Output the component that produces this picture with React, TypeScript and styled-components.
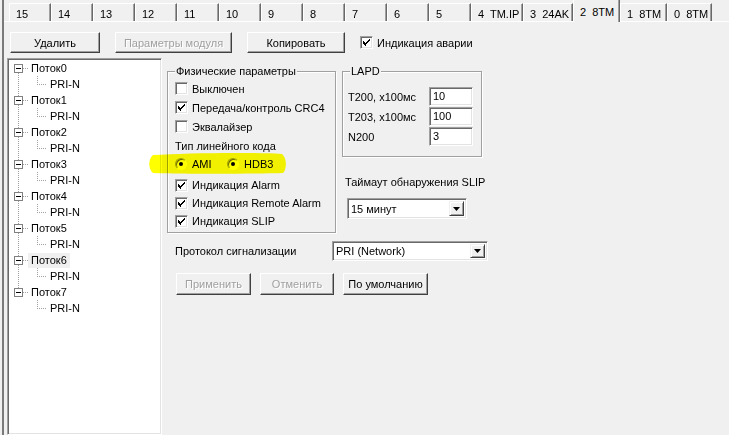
import styled, { createGlobalStyle } from 'styled-components'

const GlobalStyle = createGlobalStyle`
  html, body {
    margin: 0;
    padding: 0;
    background: #f0f0f0;
  }
  body {
    font-family: "Liberation Sans", Arial, sans-serif;
    font-size: 11px;
    color: #000;
    overflow: hidden;
  }
  * {
    box-sizing: border-box;
  }
`

const tabs = [
  { label: '15', w: 42 },
  { label: '14', w: 42 },
  { label: '13', w: 42 },
  { label: '12', w: 42 },
  { label: '11', w: 42 },
  { label: '10', w: 42 },
  { label: '9', w: 42 },
  { label: '8', w: 42 },
  { label: '7', w: 42 },
  { label: '6', w: 42 },
  { label: '5', w: 42 },
  { label: '4 TM.IP', w: 52 },
  { label: '3 24AK', w: 50 },
  { label: '2 8TM', w: 47, active: true },
  { label: '1 8TM', w: 47 },
  { label: '0 8TM', w: 45 },
]

const streams = [0, 1, 2, 3, 4, 5, 6, 7]

const CheckMark = () => (
  <svg width="7" height="7" viewBox="0 0 7 7" shapeRendering="crispEdges">
    <path d="M0 2h1v1H0zM0 3h2v1H0zM0 4h3v1H0zM1 5h2v1H1zM2 6h1v1H2zM3 3h1v2H3zM4 2h1v2H4zM5 1h1v2H5zM6 0h1v2H6z" fill="#000" />
  </svg>
)

const Check = ({ checked }: { checked?: boolean }) => (
  <CheckBox>{checked && <CheckMark />}</CheckBox>
)

const Combo = ({ value, w, h }: { value: string; w: number; h: number }) => (
  <ComboBox $w={w} $h={h}>
    <ComboText>{value}</ComboText>
    <ComboButton>
      <svg width="7" height="4" viewBox="0 0 7 4">
        <path d="M0 0h7L3.5 4z" fill="#000" />
      </svg>
    </ComboButton>
  </ComboBox>
)

const App = () => {
  return (
    <Screen>
      <GlobalStyle />
      <Window>
        <TabStrip>
          {tabs.map((t) => (
            <Tab key={t.label} $w={t.w} $active={t.active}>
              {t.label}
            </Tab>
          ))}
        </TabStrip>

        <Toolbar>
          <Button $w={90}>Удалить</Button>
          <Button $w={117} disabled>Параметры модуля</Button>
          <Button $w={98}>Копировать</Button>
          <CheckItem>
            <Check checked />
            <span>Индикация аварии</span>
          </CheckItem>
        </Toolbar>

        <Body>
          <Tree>
            {streams.map((i) => (
              <TreeGroup key={i} $last={i === streams.length - 1}>
                <NodeRow>
                  <Expander />
                  <HDots />
                  <NodeLabel $selected={i === 6}>Поток{i}</NodeLabel>
                </NodeRow>
                <LeafRow>
                  <Elbow />
                  <NodeLabel>PRI-N</NodeLabel>
                </LeafRow>
              </TreeGroup>
            ))}
          </Tree>

          <Settings>
            <TopGrid>
              <GroupBox $w={169} $h={162}>
                <Legend>Физические параметры</Legend>
                <PhysBody>
                  <Row $h={19}>
                    <CheckItem>
                      <Check />
                      <span>Выключен</span>
                    </CheckItem>
                  </Row>
                  <Row $h={19}>
                    <CheckItem>
                      <Check checked />
                      <span>Передача/контроль CRC4</span>
                    </CheckItem>
                  </Row>
                  <Row $h={19}>
                    <CheckItem>
                      <Check />
                      <span>Эквалайзер</span>
                    </CheckItem>
                  </Row>
                  <Row $h={19}>Тип линейного кода</Row>
                  <RadioRow>
                    <RadioItem $w={52}>
                      <Radio $on />
                      <span>AMI</span>
                    </RadioItem>
                    <RadioItem>
                      <Radio $on />
                      <span>HDB3</span>
                    </RadioItem>
                  </RadioRow>
                  <Row $h={18}>
                    <CheckItem>
                      <Check checked />
                      <span>Индикация Alarm</span>
                    </CheckItem>
                  </Row>
                  <Row $h={18}>
                    <CheckItem>
                      <Check checked />
                      <span>Индикация Remote Alarm</span>
                    </CheckItem>
                  </Row>
                  <Row $h={18}>
                    <CheckItem>
                      <Check checked />
                      <span>Индикация SLIP</span>
                    </CheckItem>
                  </Row>
                </PhysBody>
              </GroupBox>

              <RightCol>
                <GroupBox $w={140} $h={86}>
                  <Legend>LAPD</Legend>
                  <LapdBody>
                    <FieldRow>
                      <FieldLabel>T200, x100мс</FieldLabel>
                      <TextField>10</TextField>
                    </FieldRow>
                    <FieldRow>
                      <FieldLabel>T203, x100мс</FieldLabel>
                      <TextField>100</TextField>
                    </FieldRow>
                    <FieldRow>
                      <FieldLabel>N200</FieldLabel>
                      <TextField>3</TextField>
                    </FieldRow>
                  </LapdBody>
                </GroupBox>
                <SlipLabel>Таймаут обнаружения SLIP</SlipLabel>
                <SlipCombo>
                  <Combo value="15 минут" w={120} h={21} />
                </SlipCombo>
              </RightCol>
            </TopGrid>

            <ProtoRow>
              <ProtoLabel>Протокол сигнализации</ProtoLabel>
              <Combo value="PRI (Network)" w={156} h={20} />
            </ProtoRow>

            <ButtonRow>
              <Button $w={75} $h={22} disabled>Применить</Button>
              <Button $w={74} $h={22} disabled>Отменить</Button>
              <Button $w={85} $h={22}>По умолчанию</Button>
            </ButtonRow>
          </Settings>
        </Body>
      </Window>

      <Marker width="142" height="26" viewBox="0 0 142 26">
        <path
          d="M6 4 C 40 2, 100 1, 135 3 C 140 7, 140 18, 136 22 C 100 23, 40 23, 6 22 C 1 18, 1 8, 6 4 Z"
          fill="#ffff00"
        />
      </Marker>
    </Screen>
  )
}

export default App

const Screen = styled.div`
  position: relative;
  width: 729px;
  height: 435px;
  overflow: hidden;
  background: #f0f0f0;
`
const Window = styled.div`
  height: 435px;
  margin-left: 2px;
  border-left: 2px solid #7a7a7a;
  display: flex;
  flex-direction: column;
`
const TabStrip = styled.div`
  height: 22px;
  padding-left: 5px;
  display: flex;
  align-items: flex-end;
  border-bottom: 1px solid #fff;
`
const Tab = styled.div<{ $w: number; $active?: boolean }>`
  position: relative;
  width: ${(p) => p.$w}px;
  height: ${(p) => (p.$active ? 23 : 18)}px;
  margin-bottom: ${(p) => (p.$active ? -1 : 0)}px;
  padding: ${(p) => (p.$active ? 6 : 4)}px 0 0 6px;
  line-height: 13px;
  white-space: pre;
  word-spacing: 3px;
  background: #f0f0f0;
  border-top: 1px solid #fff;
  border-left: 1px solid #fff;
  border-right: 1px solid #696969;
  box-shadow: inset -1px 0 #a0a0a0;
  z-index: ${(p) => (p.$active ? 1 : 0)};
`
const Toolbar = styled.div`
  height: 21px;
  margin-top: 10px;
  padding-left: 6px;
  display: flex;
  align-items: center;
  gap: 15px;
`
const Button = styled.button<{ $w: number; $h?: number }>`
  width: ${(p) => p.$w}px;
  height: ${(p) => p.$h ?? 21}px;
  padding: 0;
  font: inherit;
  color: #000;
  background: #f0f0f0;
  border: 1px solid;
  border-color: #fff #404040 #404040 #fff;
  box-shadow: inset -1px -1px #a0a0a0;
  border-radius: 0;

  &:disabled {
    color: #a0a0a0;
    text-shadow: 1px 1px 0 #fff;
  }
`
const CheckItem = styled.label`
  display: flex;
  align-items: center;
  gap: 4px;
  white-space: nowrap;
`
const CheckBox = styled.span`
  width: 13px;
  height: 13px;
  display: inline-flex;
  align-items: center;
  justify-content: center;
  background: #fff;
  border: 1px solid;
  border-color: #a0a0a0 #fff #fff #a0a0a0;
  box-shadow: inset 1px 1px #696969, inset -1px -1px #e3e3e3;
`
const Radio = styled.span<{ $on?: boolean }>`
  position: relative;
  width: 12px;
  height: 12px;
  border-radius: 50%;
  background: #fff;
  border: 1px solid;
  border-color: #a0a0a0 #fff #fff #a0a0a0;
  box-shadow: inset 1px 1px #696969;

  &::after {
    content: '';
    display: ${(p) => (p.$on ? 'block' : 'none')};
    position: absolute;
    left: 3px;
    top: 3px;
    width: 4px;
    height: 4px;
    border-radius: 50%;
    background: #000;
  }
`
const Body = styled.div`
  flex: 1;
  margin-top: 5px;
  display: flex;
  min-height: 0;
`
const Tree = styled.div`
  width: 155px;
  margin-left: 3px;
  background: #fff;
  border: 1px solid;
  border-color: #a0a0a0 #fff #fff #a0a0a0;
  box-shadow: inset 1px 1px #696969, inset -1px -1px #e3e3e3;
  padding: 1px;
`
const dottedV = `repeating-linear-gradient(to bottom, #a0a0a0 0 1px, transparent 1px 2px)`
const dottedH = `repeating-linear-gradient(to right, #a0a0a0 0 1px, transparent 1px 2px)`

const TreeGroup = styled.div<{ $last?: boolean }>`
  position: relative;

  &::before {
    content: '';
    display: ${(p) => (p.$last ? 'none' : 'block')};
    position: absolute;
    left: 9px;
    top: 13px;
    width: 1px;
    height: 23px;
    background: ${dottedV};
  }
`
const NodeRow = styled.div`
  height: 16px;
  display: flex;
  align-items: center;
`
const Expander = styled.span`
  position: relative;
  width: 9px;
  height: 9px;
  margin-left: 5px;
  background: #fff;
  border: 1px solid #808080;

  &::after {
    content: '';
    position: absolute;
    left: 1px;
    top: 3px;
    width: 5px;
    height: 1px;
    background: #000;
  }
`
const HDots = styled.span`
  width: 5px;
  height: 1px;
  background: ${dottedH};
`
const NodeLabel = styled.span<{ $selected?: boolean }>`
  height: 15px;
  line-height: 15px;
  padding: 0 3px;
  white-space: nowrap;
  background: ${(p) => (p.$selected ? '#f0f0f0' : 'transparent')};
`
const LeafRow = styled.div`
  height: 16px;
  display: flex;
  align-items: center;
`
const Elbow = styled.span`
  position: relative;
  width: 10px;
  height: 16px;
  margin-left: 28px;

  &::before {
    content: '';
    position: absolute;
    left: 0;
    top: 0;
    width: 1px;
    height: 8px;
    background: ${dottedV};
  }
  &::after {
    content: '';
    position: absolute;
    left: 0;
    top: 8px;
    width: 10px;
    height: 1px;
    background: ${dottedH};
  }
`
const Settings = styled.div`
  flex: 1;
  padding: 13px 0 0 5px;
`
const TopGrid = styled.div`
  display: flex;
  align-items: flex-start;
  gap: 6px;
`
const GroupBox = styled.div<{ $w: number; $h: number }>`
  position: relative;
  width: ${(p) => p.$w}px;
  height: ${(p) => p.$h}px;
  border: 1px solid #a0a0a0;
  box-shadow: inset 1px 1px #fff, 1px 1px 0 #fff;
`
const Legend = styled.span`
  position: absolute;
  top: -7px;
  left: 7px;
  padding: 0 1px;
  line-height: 13px;
  background: #f0f0f0;
`
const PhysBody = styled.div`
  padding: 7px 0 0 7px;
`
const Row = styled.div<{ $h: number }>`
  height: ${(p) => p.$h}px;
  display: flex;
  align-items: center;
`
const RadioRow = styled.div`
  height: 21px;
  padding-bottom: 4px;
  display: flex;
  align-items: center;
`
const RadioItem = styled.label<{ $w?: number }>`
  width: ${(p) => (p.$w ? `${p.$w}px` : 'auto')};
  display: flex;
  align-items: center;
  gap: 5px;
`
const RightCol = styled.div`
  display: flex;
  flex-direction: column;
`
const LapdBody = styled.div`
  padding: 15px 0 0 5px;
  display: flex;
  flex-direction: column;
  gap: 1px;
`
const FieldRow = styled.div`
  height: 19px;
  display: flex;
  align-items: center;
`
const FieldLabel = styled.span`
  width: 81px;
  white-space: nowrap;
`
const TextField = styled.div`
  width: 44px;
  height: 19px;
  padding-left: 3px;
  line-height: 17px;
  background: #fff;
  border: 1px solid;
  border-color: #a0a0a0 #fff #fff #a0a0a0;
  box-shadow: inset 1px 1px #696969, inset -1px -1px #e3e3e3;
`
const SlipLabel = styled.div`
  margin-top: 18px;
  padding-left: 3px;
  line-height: 14px;
  white-space: nowrap;
`
const SlipCombo = styled.div`
  margin: 9px 0 0 5px;
`
const ComboBox = styled.div<{ $w: number; $h: number }>`
  width: ${(p) => p.$w}px;
  height: ${(p) => p.$h}px;
  display: flex;
  padding: 2px;
  background: #fff;
  border: 1px solid;
  border-color: #a0a0a0 #fff #fff #a0a0a0;
  box-shadow: inset 1px 1px #696969, inset -1px -1px #e3e3e3;
`
const ComboText = styled.span`
  flex: 1;
  padding-left: 1px;
  display: flex;
  align-items: center;
  white-space: nowrap;
`
const ComboButton = styled.span`
  width: 15px;
  display: flex;
  align-items: center;
  justify-content: center;
  background: #f0f0f0;
  border: 1px solid;
  border-color: #f0f0f0 #404040 #404040 #f0f0f0;
  box-shadow: inset 1px 1px #fff, inset -1px -1px #a0a0a0;
`
const ProtoRow = styled.div`
  margin-top: 8px;
  padding-left: 8px;
  display: flex;
  align-items: center;
`
const ProtoLabel = styled.span`
  width: 157px;
  white-space: nowrap;
`
const ButtonRow = styled.div`
  margin-top: 12px;
  padding-left: 9px;
  display: flex;
  gap: 9px;
`
const Marker = styled.svg`
  position: absolute;
  left: 147px;
  top: 151px;
  mix-blend-mode: multiply;
  pointer-events: none;
`
